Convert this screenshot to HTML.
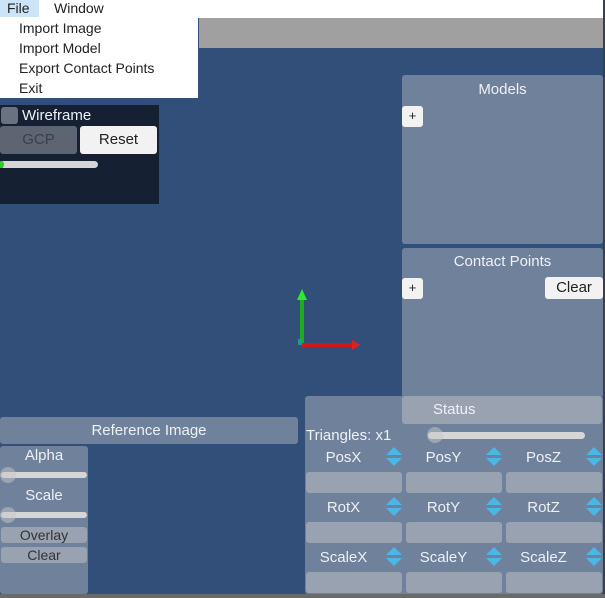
<!DOCTYPE html><html><head><style>
*{margin:0;padding:0;box-sizing:border-box}
body{width:605px;height:598px;background:#314f78;position:relative;overflow:hidden;font-family:"Liberation Sans",sans-serif;font-size:14px;color:#eef1f5}
.a{position:absolute}
.p{background:#6f819b;border-radius:3px}
.f{background:#98a2b1;border-radius:3px;position:absolute}
.c{text-align:center}
.l{font-size:15px}
.btnw{background:#f2f2f2;border-radius:3px;color:#222;text-align:center}
</style></head><body>
<div class="a" style="left:0;top:0;width:605px;height:18px;background:#fff"></div>
<div class="a" style="left:199px;top:18px;width:405px;height:30px;background:#a0a0a0"></div>
<div class="a" style="left:603px;top:0;width:2px;height:598px;background:#3a3f48"></div>
<div class="a" style="left:0;top:594px;width:605px;height:4px;background:#6a6a6a"></div>
<div class="a" style="left:0;top:0;width:198px;height:98px;background:#fff;color:#222">
<div class="a" style="left:0;top:0;width:39px;height:17px;background:#cce4f7"></div>
<div class="a" style="left:7px;top:0">File</div><div class="a" style="left:54px;top:0">Window</div>
<div class="a" style="left:19px;top:20px">Import Image</div>
<div class="a" style="left:19px;top:40px">Import Model</div>
<div class="a" style="left:19px;top:60px">Export Contact Points</div>
<div class="a" style="left:19px;top:80px">Exit</div></div>
<div class="a" style="left:0;top:105px;width:159px;height:99px;background:#152033">
<div class="a" style="left:1px;top:2px;width:17px;height:17px;background:#6a7282;border-radius:3px"></div>
<div class="a" style="left:22px;top:2px;font-size:15px">Wireframe</div>
<div class="a c" style="left:0;top:21px;width:77px;height:28px;background:#5e6572;border-radius:3px;color:#3a3f48;line-height:28px;font-size:15px">GCP</div>
<div class="a btnw" style="left:80px;top:21px;width:77px;height:28px;line-height:28px;font-size:15px">Reset</div>
<div class="a" style="left:0;top:56px;width:98px;height:7px;background:#d6d6d6;border-radius:4px"></div>
<div class="a" style="left:-2px;top:56px;width:6px;height:7px;background:#2ecc2e;border-radius:3px"></div></div>
<div class="a p" style="left:402px;top:75px;width:201px;height:169px"><div class="c l" style="margin-top:6px">Models</div></div>
<div class="a btnw" style="left:402px;top:106px;width:21px;height:21px;line-height:20px;font-size:13px">+</div>
<div class="a p" style="left:402px;top:248px;width:201px;height:150px"><div class="c l" style="margin-top:5px">Contact Points</div></div>
<div class="a btnw" style="left:402px;top:278px;width:21px;height:21px;line-height:20px;font-size:13px">+</div>
<div class="a btnw" style="left:545px;top:277px;width:58px;height:22px;line-height:22px;font-size:15px">Clear</div>
<svg class="a" style="left:290px;top:285px" width="80" height="70">
<rect x="10" y="14" width="4" height="46" fill="#1faa1f"/><polygon points="7,15 12,4 17,15" fill="#2ee82e"/>
<rect x="12" y="58" width="52" height="4" fill="#d01818"/><polygon points="62,55 70,60 62,65" fill="#e02020"/>
<rect x="8" y="54" width="4" height="6" fill="#1a9a9a"/></svg>
<div class="a p" style="left:0;top:417px;width:298px;height:27px;font-size:15px;text-align:center;line-height:27px">Reference Image</div>
<div class="a p" style="left:0;top:446px;width:88px;height:148px">
<div class="c l" style="margin-top:1px">Alpha</div>
<div class="a" style="left:1px;top:26px;width:86px;height:6px;background:#d6d6d6;border-radius:3px"></div>
<div class="a" style="left:0;top:21px;width:16px;height:16px;background:rgba(200,200,200,.5);border-radius:50%"></div>
<div class="c a l" style="left:0;top:41px;width:88px">Scale</div>
<div class="a" style="left:1px;top:66px;width:86px;height:6px;background:#d6d6d6;border-radius:3px"></div>
<div class="a" style="left:0;top:61px;width:16px;height:16px;background:rgba(200,200,200,.5);border-radius:50%"></div>
<div class="f c" style="left:1px;top:81px;width:86px;height:16px;color:#333;line-height:16px">Overlay</div>
<div class="f c" style="left:1px;top:101px;width:86px;height:16px;color:#333;line-height:16px">Clear</div></div>
<div class="a p" style="left:305px;top:396px;width:298px;height:198px"></div>
<div class="a l" style="left:402px;top:396px;width:200px;height:28px;background:#98a2b1;border-radius:3px;line-height:28px;padding-left:31px">Status</div>
<div class="a l" style="left:306px;top:427px">Triangles: x1</div>
<div class="a" style="left:428px;top:432px;width:157px;height:7px;background:#d6d6d6;border-radius:4px"></div>
<div class="a" style="left:427px;top:427px;width:16px;height:16px;background:rgba(200,200,200,.5);border-radius:50%"></div>
<svg width="0" height="0" style="position:absolute"><defs><g id="ar"><polygon points="9,0 17,8 1,8" fill="#4ab7e6"/><polygon points="1,11 17,11 9,19" fill="#4ab7e6"/></g></defs></svg>
<div class="a c l" style="left:306px;top:449px;width:75px">PosX</div><div class="a c l" style="left:406px;top:449px;width:75px">PosY</div><div class="a c l" style="left:506px;top:449px;width:75px">PosZ</div>
<div class="a c l" style="left:306px;top:499px;width:75px">RotX</div><div class="a c l" style="left:406px;top:499px;width:75px">RotY</div><div class="a c l" style="left:506px;top:499px;width:75px">RotZ</div>
<div class="a c l" style="left:306px;top:549px;width:75px">ScaleX</div><div class="a c l" style="left:406px;top:549px;width:75px">ScaleY</div><div class="a c l" style="left:506px;top:549px;width:75px">ScaleZ</div>
<svg class="a" style="left:385px;top:447px" width="220" height="140">
<use href="#ar"/><use href="#ar" x="100"/><use href="#ar" x="200"/>
<use href="#ar" y="50"/><use href="#ar" x="100" y="50"/><use href="#ar" x="200" y="50"/>
<use href="#ar" y="100"/><use href="#ar" x="100" y="100"/><use href="#ar" x="200" y="100"/></svg>
<div class="f" style="left:306px;top:472px;width:96px;height:21px"></div><div class="f" style="left:406px;top:472px;width:96px;height:21px"></div><div class="f" style="left:506px;top:472px;width:96px;height:21px"></div>
<div class="f" style="left:306px;top:522px;width:96px;height:21px"></div><div class="f" style="left:406px;top:522px;width:96px;height:21px"></div><div class="f" style="left:506px;top:522px;width:96px;height:21px"></div>
<div class="f" style="left:306px;top:572px;width:96px;height:21px"></div><div class="f" style="left:406px;top:572px;width:96px;height:21px"></div><div class="f" style="left:506px;top:572px;width:96px;height:21px"></div>
</body></html>
